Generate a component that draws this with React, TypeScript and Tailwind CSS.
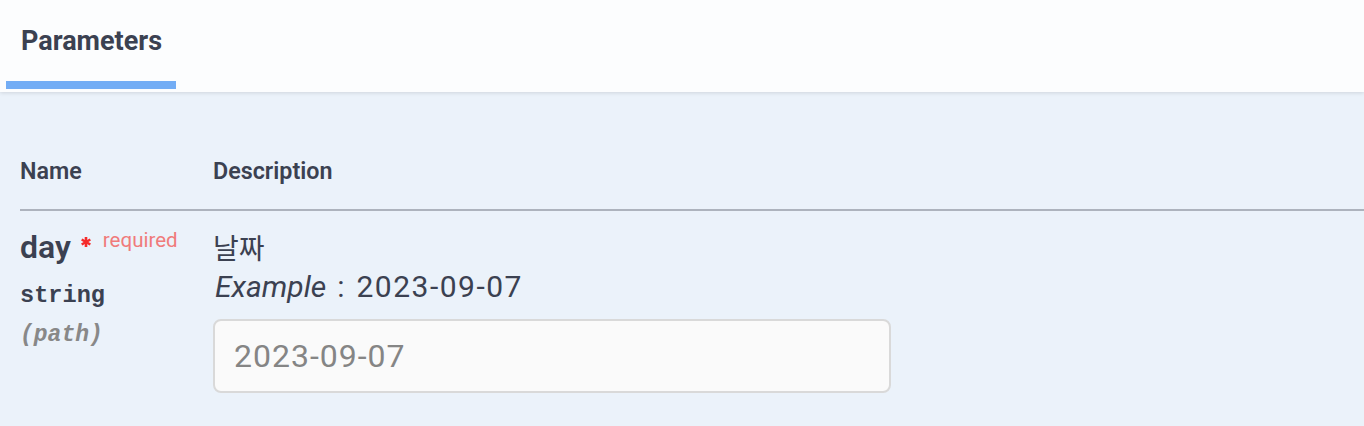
function Star() {
  return (
    <svg viewBox="0 0 10 10" className="inline-block w-[10px] h-[10px] ml-[10px] align-[11px]">
      <g stroke="#f52b2b" strokeWidth="2.6" strokeLinecap="butt">
        <line x1="5" y1="0" x2="5" y2="10" />
        <line x1="0.7" y1="2.5" x2="9.3" y2="7.5" />
        <line x1="0.7" y1="7.5" x2="9.3" y2="2.5" />
      </g>
    </svg>
  );
}

export default function App() {
  return (
    <div className="w-[1364px] h-[426px] overflow-hidden bg-[#ebf2fa] font-['Roboto','Noto_Sans_CJK_KR',sans-serif] text-[#3b4151]">
      <div className="relative z-10 h-[92px] bg-[#fcfdfe] shadow-[0_1px_4px_rgba(0,0,0,0.12)] pl-[6px]">
        <div className="w-[170px] flex flex-col">
          <h4 className="pt-[25px] pl-[15px] text-[27px] leading-[32px] font-bold">Parameters</h4>
          <div className="mt-[24px] h-[8px] bg-[#73adf5]" />
        </div>
      </div>
      <div className="pl-[20px] pt-[67px]">
        <div className="grid grid-cols-[193px_1fr] border-b-2 border-[#adb3bd] pb-[26px] text-[23.3px] leading-[24px] font-semibold">
          <div>Name</div>
          <div>Description</div>
        </div>
        <div className="grid grid-cols-[193px_1fr] pt-[21px] pb-[10px]">
          <div className="flex flex-col">
            <div className="text-[32px] leading-[30px] font-semibold whitespace-nowrap">
              day
              <Star />
              <span className="pl-[12px] text-[20.5px] leading-[12px] font-normal text-[#f07b7b] align-[11px]">required</span>
            </div>
            <div className="mt-[20px] font-['Liberation_Mono',monospace] text-[23.6px] leading-[28px] font-bold">string</div>
            <div className="mt-[11px] font-['Liberation_Mono',monospace] text-[23px] leading-[28px] font-bold italic text-[#888888]">(path)</div>
          </div>
          <div className="flex flex-col">
            <p className="text-[28px] leading-[36px]">날짜</p>
            <p className="text-[30px] leading-[38px] whitespace-nowrap">
              <i className="pl-[2px] mr-[11px]">Example</i>:<span className="ml-[12px] tracking-[1.5px]">2023-09-07</span>
            </p>
            <input
              className="mt-[13px] w-[678px] h-[74px] rounded-[8px] border-2 border-[#d9d9d9] bg-[#fafafa] pl-[19px] text-[32px] tracking-[1px] text-[#3b4151] placeholder:text-[#858585] outline-none"
              placeholder="2023-09-07"
            />
          </div>
        </div>
        <div className="grid grid-cols-[193px_1fr] pt-[23px]">
          <div className="text-[32px] leading-[30px] font-semibold whitespace-nowrap">
            no
            <Star />
            <span className="pl-[12px] text-[20.5px] leading-[12px] font-normal text-[#f07b7b] align-[11px]">required</span>
          </div>
          <div />
        </div>
      </div>
    </div>
  );
}
